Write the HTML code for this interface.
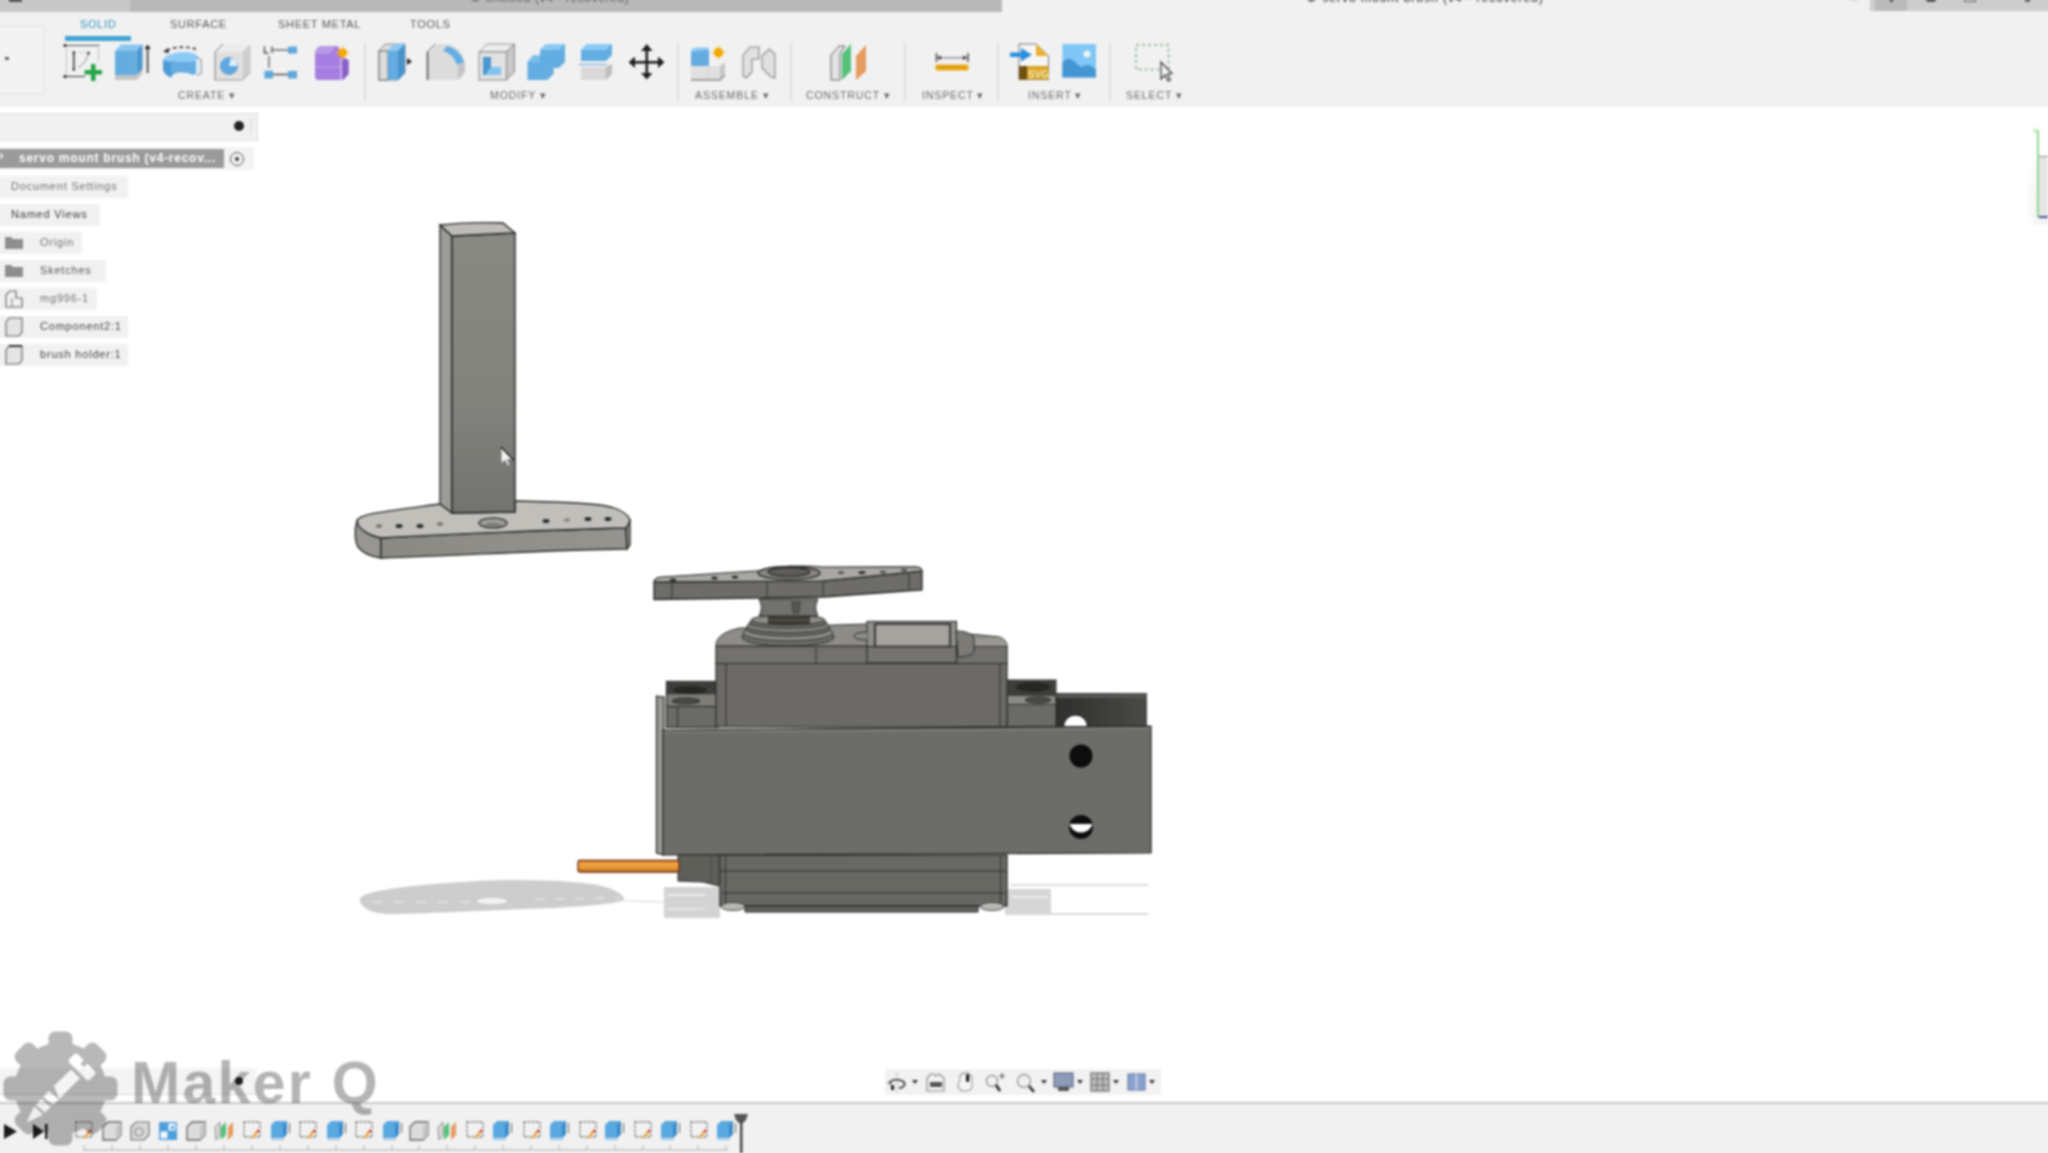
<!DOCTYPE html>
<html><head><meta charset="utf-8">
<style>
*{margin:0;padding:0;box-sizing:border-box}
html,body{width:2048px;height:1153px;overflow:hidden;background:#fff;font-family:"Liberation Sans",sans-serif;position:relative}
.a{position:absolute}
.tab{position:absolute;top:18px;font-size:11px;color:#5a5a5a;letter-spacing:0.7px;white-space:nowrap}
.lbl{position:absolute;top:89px;font-size:10.5px;color:#6a6a6a;white-space:nowrap;letter-spacing:0.9px}
.sep{position:absolute;top:43px;width:2px;height:58px;background:#dedede}
.bi{position:absolute;left:-8px;height:22px;background:#f1f1f1}
.bt{position:absolute;font-size:11px;color:#707070;white-space:nowrap;top:4px;letter-spacing:0.8px}
svg{position:absolute;overflow:visible}
</style></head><body><div id="root" style="position:absolute;left:-8px;top:-8px;width:2064px;height:1169px;overflow:hidden;background:#fff;filter:blur(0.8px)"><div id="in" style="position:absolute;left:8px;top:8px;width:2048px;height:1153px">
<!-- title bar -->
<div class="a" style="left:-8px;top:-8px;width:2064px;height:20px;background:#f1f1f1"></div>
<div class="a" style="left:-8px;top:-8px;width:138px;height:20px;background:#c8c8c8"></div>
<div class="a" style="left:130px;top:-8px;width:872px;height:20px;background:#b9b9b9"></div>
<div class="a" style="left:9px;top:-8px;width:13px;height:10px;background:#555"></div>
<div class="a" style="left:1870px;top:-8px;width:186px;height:19px;background:#cdcdcd"></div>
<div class="a" style="left:1875px;top:-8px;width:32px;height:19px;background:#bababa"></div>
<div class="a" style="left:1890px;top:-8px;width:3px;height:10px;background:#555"></div>
<div class="a" style="left:1926px;top:-8px;width:10px;height:10px;background:#555;border-radius:3px"></div>
<div class="a" style="left:1964px;top:-8px;width:12px;height:10px;border:1.5px solid #666"></div>
<div class="a" style="left:2025px;top:-8px;width:5px;height:10px;background:#666"></div>
<div class="a" style="left:1850px;top:-8px;width:8px;height:9px;background:#e0e0e0"></div>
<div class="a" style="left:470px;top:-9px;font-size:12px;color:#666;white-space:nowrap;letter-spacing:0.6px">⚙ Untitled (v4 - recovered)</div>
<div class="a" style="left:1306px;top:-9px;font-size:12px;color:#333;white-space:nowrap;letter-spacing:1px">⚙ servo mount brush (v4 - recovered)</div>
<!-- toolbar -->
<div class="a" style="left:-8px;top:12px;width:2064px;height:95px;background:#f1f1f1"></div>
<div class="a" style="left:-9px;top:26px;width:53px;height:68px;border:1px solid #e2e2e2;background:#f3f3f3"></div>
<div class="a" style="left:5px;top:57px;width:4px;height:3px;background:#666"></div>
<div class="tab" style="left:80px;color:#3590c4">SOLID</div>
<div class="tab" style="left:170px">SURFACE</div>
<div class="tab" style="left:278px">SHEET METAL</div>
<div class="tab" style="left:410px">TOOLS</div>
<div class="a" style="left:65px;top:36px;width:66px;height:5px;background:#3fa4d3"></div>
<div class="lbl" style="left:178px">CREATE ▾</div>
<div class="lbl" style="left:490px">MODIFY ▾</div>
<div class="lbl" style="left:695px">ASSEMBLE ▾</div>
<div class="lbl" style="left:806px">CONSTRUCT ▾</div>
<div class="lbl" style="left:922px">INSPECT ▾</div>
<div class="lbl" style="left:1028px">INSERT ▾</div>
<div class="lbl" style="left:1126px">SELECT ▾</div>
<div class="sep" style="left:364px"></div>
<div class="sep" style="left:677px"></div>
<div class="sep" style="left:790px"></div>
<div class="sep" style="left:904px"></div>
<div class="sep" style="left:997px"></div>
<div class="sep" style="left:1109px"></div>
<!--ICONS-->
<svg style="left:0;top:0" width="1200" height="110" viewBox="0 0 1200 110"><defs><filter id="ib" x="-2%" y="-20%" width="104%" height="140%"><feGaussianBlur stdDeviation="0.8"/></filter></defs>
<g >
<!-- sketch -->
<g>
 <line x1="64" y1="45.5" x2="99.5" y2="45.5" stroke="#4a4a4a" stroke-width="1.2"/>
 <line x1="64" y1="76.5" x2="85" y2="76.5" stroke="#4a4a4a" stroke-width="1.2"/>
 <circle cx="65" cy="45.5" r="1.6" fill="#222"/>
 <circle cx="65" cy="76.5" r="1.6" fill="#222"/>
 <line x1="66.5" y1="48" x2="66.5" y2="75" stroke="#c4c4c4" stroke-width="1"/>
 <line x1="98.5" y1="48" x2="98.5" y2="62" stroke="#c4c4c4" stroke-width="1"/>
 <line x1="73.8" y1="52" x2="73.8" y2="70" stroke="#333" stroke-width="1.5"/>
 <circle cx="73.8" cy="52.5" r="1.3" fill="#222"/>
 <circle cx="73.8" cy="69.5" r="1.3" fill="#222"/>
 <path d="M78.5,67.5 C84,64 88,58 88.5,53" stroke="#555" stroke-width="1" fill="none" stroke-dasharray="2 1"/>
 <circle cx="88.5" cy="53" r="1.3" fill="#222"/>
 <line x1="78" y1="52.5" x2="86" y2="52.5" stroke="#ccc" stroke-width="1"/>
 <path d="M91,64 h4.5 v6 h6.5 v4.5 h-6.5 v6.5 h-4.5 v-6.5 h-6.5 v-4.5 h6.5 z" fill="#25a448"/>
</g>
<!-- extrude -->
<g>
 <path d="M115,51 L121,44.5 L142.6,44.5 L136.6,51 Z" fill="#88c6f0"/>
 <path d="M136.6,51 L142.6,44.5 L142.6,69 L136.6,75 Z" fill="#4d97cf"/>
 <rect x="115" y="51" width="21.6" height="24" fill="#65addf"/>
 <path d="M115,75 L136.6,75 L142.6,69 L142.6,73 L137,80 L115,80 Z" fill="#c3c3c3"/>
 <line x1="147.6" y1="48" x2="147.6" y2="73" stroke="#444" stroke-width="1.8"/>
 <path d="M144.5,49 L147.6,44.5 L150.7,49 Z" fill="#222"/>
</g>
<!-- revolve -->
<g>
 <path d="M163,60 C170,61 185,62 196,61 L196,74 L192,75 C188,72 178,72 174,74 L171,77.5 C166,75 163,72 163,69 Z" fill="#66ade3"/>
 <path d="M163,60 C165,55 175,52 185,52 C192,52 197,54 198,58 L196,61 C185,62 170,61 163,60 Z" fill="#8ccbf8"/>
 <path d="M163,60 L171,63 L171,77.5 C166,75 163,72 163,69 Z" fill="#4e9ad6"/>
 <path d="M197,57 L201.5,60 L201.5,73 L196.5,76" stroke="#666" stroke-width="1.1" fill="#dbeaf5" stroke-dasharray="2 1.5"/>
 <path d="M167,50.5 C174,46.5 188,46 197,49.5" stroke="#333" stroke-width="1.7" fill="none" stroke-dasharray="3.5 3"/>
 <path d="M163,51.5 L168.5,48 L168.5,53.5 Z" fill="#333"/>
</g>
<!-- hole -->
<g>
 <path d="M215,52 L223,44 L250.5,44 L242.5,52 Z" fill="#ececec"/>
 <path d="M242.5,52 L250.5,44 L250.5,72 L242.5,80 Z" fill="#cdcdcd"/>
 <rect x="215" y="52" width="27.5" height="28" fill="#e0e0e0"/>
 <path d="M215,80 L215,52 L223,44" stroke="#777" stroke-width="1" fill="none"/>
 <path d="M215,80 L242.5,80 L250.5,72" stroke="#999" stroke-width="1" fill="none"/>
 <circle cx="229" cy="66" r="8.5" fill="#5ea8e2" stroke="#4a7fb0" stroke-width="1" stroke-dasharray="2 1.5"/>
 <path d="M231,58 A8.5,8.5 0 0 1 237.5,66 L229,66 Z" fill="#e2f2ff"/>
</g>
<!-- pattern -->
<g>
 <path d="M264.5,46.5 v6.5 h4 M272,46.5 v6.5" stroke="#555" stroke-width="1.5" fill="none"/>
 <line x1="273" y1="50" x2="288" y2="50" stroke="#666" stroke-width="1.4"/>
 <line x1="273" y1="74.5" x2="288" y2="74.5" stroke="#555" stroke-width="1.6"/>
 <line x1="269" y1="56" x2="269" y2="68" stroke="#555" stroke-width="1.2"/>
 <rect x="264.4" y="70.8" width="8.6" height="7.7" fill="#5ea8dc"/>
 <rect x="288" y="46.6" width="9" height="7" fill="#5ea8dc"/>
 <rect x="288" y="71" width="9" height="7.5" fill="#5ea8dc"/>
</g>
<!-- create form -->
<g>
 <path d="M315,54 C315,50 318,46 322,46 L338,46 L341,56 L348.5,60 L348.5,74 L343,80 L318,80 C316,80 315,78 315,76 Z" fill="#a67de0"/>
 <path d="M315,54 C316,49 319,46 322,46 L336,46 L330,54 Z" fill="#b899e8"/>
 <path d="M342,58 L348.5,60 L348.5,74 L343,80 Z" fill="#875fc6"/>
 <line x1="316" y1="67" x2="342" y2="67" stroke="#c2a6ee" stroke-width="1"/>
 <line x1="341" y1="58" x2="341" y2="80" stroke="#ead8ff" stroke-width="1"/>
 <circle cx="342.5" cy="52.8" r="4.6" fill="#f2a900"/>
 <g stroke="#f6c040" stroke-width="1.2"><line x1="342.5" y1="45.5" x2="342.5" y2="47.5"/><line x1="349.5" y1="52.8" x2="347.5" y2="52.8"/><line x1="335.5" y1="52.8" x2="337.5" y2="52.8"/><line x1="342.5" y1="60" x2="342.5" y2="58"/></g>
</g>
<!-- press pull -->
<g>
 <path d="M379,51 L385,44 L405,44 L405,73 L398,80 L379,80 Z" fill="#ddd" stroke="#777" stroke-width="0.8"/>
 <rect x="379" y="51" width="9" height="29" fill="#dcdcdc" stroke="#666" stroke-width="1"/>
 <path d="M388,51 L394,44 L405,44 L405,73 L398,80 L388,80 Z" fill="#63abe0"/>
 <path d="M388,51 L394,44 L405,44 L398,51 Z" fill="#8ccaf3"/>
 <path d="M398,51 L405,44 L405,73 L398,80 Z" fill="#4a94cc"/>
 <path d="M407,58 L412,61.5 L407,65 Z" fill="#222"/>
</g>
<!-- fillet -->
<g>
 <path d="M427,52 L435,44 L448,44 C458,46 464,54 465,64 L465,72 L458,80 L427,80 Z" fill="#dcdcdc"/>
 <path d="M447,46 C456,48 462,55 464,62 L457,65 C455,58 450,53 443,51 Z" fill="#62aee4"/>
 <path d="M458,66 L465,62 L465,72 L458,80 Z" fill="#c4c4c4"/>
 <line x1="427.5" y1="52" x2="427.5" y2="80" stroke="#555" stroke-width="1.6"/>
 <line x1="427" y1="52" x2="435" y2="44" stroke="#777" stroke-width="1"/>
</g>
<!-- shell -->
<g>
 <path d="M479,52 L487,44 L514.5,44 L506.5,52 Z" fill="#ececec" stroke="#888" stroke-width="0.8"/>
 <path d="M506.5,52 L514.5,44 L514.5,72 L506.5,80 Z" fill="#c8c8c8" stroke="#777" stroke-width="0.8"/>
 <rect x="479" y="52" width="27.5" height="28" fill="#e2e2e2" stroke="#888" stroke-width="1"/>
 <path d="M483,57 L491,57 L491,67 L501,67 L501,75 L483,75 Z" fill="#80c2f0"/>
 <path d="M483,57 L491,57 L491,67 L485,75 L483,75 Z" fill="#4a97d2"/>
</g>
<!-- combine -->
<g>
 <path d="M540,50 L546,44 L565,44 L565,62 L559,68 L540,68 Z" fill="#63ade2"/>
 <path d="M540,50 L546,44 L565,44 L559,50 Z" fill="#8ccaf3"/>
 <path d="M527.5,62 L533,55.6 L553.6,55.6 L553.6,74 L547,80 L527.5,80 Z" fill="#63ade2"/>
 <path d="M527.5,62 L533,55.6 L540,55.6 L540,62 Z" fill="#7cbdea"/>
</g>
<!-- split -->
<g>
 <path d="M581,50 L587,44 L612,44 L612,55 L606,61 L581,61 Z" fill="#63ade2"/>
 <path d="M581,50 L587,44 L612,44 L606,50 Z" fill="#8ccaf3"/>
 <line x1="579" y1="64.5" x2="607" y2="64.5" stroke="#8fb8d8" stroke-width="1.5"/>
 <path d="M581,67 L606,67 L612,64 L612,74 L606,80 L581,80 Z" fill="#d8d8d8"/>
 <path d="M606,67 L612,64 L612,74 L606,80 Z" fill="#bdbdbd"/>
</g>
<!-- move -->
<g fill="#1e1e1e">
 <rect x="632" y="61" width="29" height="2.6"/>
 <rect x="645.5" y="48" width="2.6" height="28"/>
 <path d="M628.6,62.2 L635,56.5 L635,68 Z"/>
 <path d="M664.5,62.2 L658,56.5 L658,68 Z"/>
 <path d="M646.8,44 L641,51 L652.5,51 Z"/>
 <path d="M646.8,79.4 L641,73 L652.5,73 Z"/>
</g>
<!-- new component -->
<g>
 <path d="M691,80 L691,53 C691,50 693,49 695,49 L709,49 L709,66 L722,66 L725,62 L725,75 L720,80 Z" fill="#e0e0e0"/>
 <path d="M691,66 L691,53 C691,50 693,49 695,49 L709,49 L709,66 Z" fill="#64abe0"/>
 <path d="M691,49.5 L696,47.5 L709,47.5 L709,50 L691,52 Z" fill="#8ccaf3"/>
 <path d="M720,66 L725,62 L725,75 L720,80 Z" fill="#c8c8c8"/>
 <line x1="708.5" y1="67" x2="708.5" y2="80" stroke="#d0d0d0" stroke-width="1"/>
 <path d="M691,80 L720,80 L725,75" stroke="#8a8a8a" stroke-width="1.3" fill="none"/>
 <circle cx="718.5" cy="52.6" r="4.8" fill="#f2a900"/>
 <g stroke="#f6c040" stroke-width="1.2"><line x1="718.5" y1="45.5" x2="718.5" y2="47.5"/><line x1="725.5" y1="52.6" x2="723.5" y2="52.6"/><line x1="711.5" y1="52.6" x2="713.5" y2="52.6"/><line x1="718.5" y1="59.6" x2="718.5" y2="57.6"/></g>
</g>
<!-- joint -->
<g fill="#e0e0e0" stroke="#888" stroke-width="1.1">
 <path d="M743,55 L750,47 L759,47 L759,59 L752,59 L752,72 L746,78 L743,76 Z"/>
 <path d="M762,56 L769,49 L775,54 L775,78 L771,77 L762,68 Z"/>
</g>
<!-- construct -->
<g>
 <path d="M831,55 L839,46 L845,46 L840,54 L840,80 L831,80 Z" fill="#e2e2e2" stroke="#666" stroke-width="1"/>
 <path d="M842,54 L851,44 L851,71 L842,80 Z" fill="#55c27a"/>
 <path d="M856,56 L866,45 L866,71 L856,80 Z" fill="#e69a5e"/>
</g>
<!-- measure -->
<g>
 <line x1="936.5" y1="53" x2="936.5" y2="62" stroke="#555" stroke-width="1.6"/>
 <line x1="968" y1="53" x2="968" y2="62" stroke="#555" stroke-width="1.6"/>
 <line x1="937" y1="57.8" x2="967" y2="57.8" stroke="#666" stroke-width="1"/>
 <path d="M937,57.8 L941,55.5 L941,60 Z M967,57.8 L963,55.5 L963,60 Z" fill="#333"/>
 <rect x="935.5" y="64.4" width="33" height="6" rx="1.5" fill="#eca812"/>
 <line x1="938" y1="67.3" x2="966" y2="67.3" stroke="#a97a08" stroke-width="1" stroke-dasharray="2 2"/>
</g>
<!-- insert svg -->
<g>
 <path d="M1019,44 L1036,44 L1048.5,56 L1048.5,79.5 L1019,79.5 Z" fill="#f6f6f6" stroke="#777" stroke-width="1"/>
 <path d="M1036,44 L1048.5,56 L1036,56 Z" fill="#e8b030"/>
 <rect x="1019" y="66" width="29.5" height="13.5" fill="#d8a428"/>
 <rect x="1019" y="66" width="8" height="13.5" fill="#6e5010"/>
 <text x="1028" y="77.5" font-family="Liberation Sans" font-size="10" font-weight="bold" fill="#f8e8b0">SVG</text>
 <rect x="1010" y="52.5" width="13" height="4.5" fill="#2a8ee0"/>
 <path d="M1021,48 L1032,54.7 L1021,61.5 Z" fill="#2a8ee0"/>
</g>
<!-- canvas -->
<g>
 <rect x="1062.4" y="44" width="33.6" height="33.5" fill="#80c6f6"/>
 <path d="M1062.4,77.5 L1062.4,63 C1066,57 1071,58 1075,62 C1079,66 1081,68 1084,66 C1087,64 1091,65 1096,70 L1096,77.5 Z" fill="#4496d2"/>
 <circle cx="1087" cy="54" r="3.5" fill="#e8f8f0"/>
</g>
<!-- select -->
<g>
 <rect x="1136" y="45" width="32.5" height="24.5" fill="none" stroke="#7fb08a" stroke-width="1.5" stroke-dasharray="3 3"/>
 <path d="M1161,62 L1161,79 L1165,75 L1168,81 L1170.5,80 L1167.5,74 L1172,73.5 Z" fill="#f2f2f2" stroke="#333" stroke-width="1.2"/>
</g>
</g>
</svg>

<!--/ICONS-->
<!-- browser -->
<div class="a" style="left:-9px;top:113px;width:267px;height:28px;background:#f1f1f1;border:1px solid #dcdcdc"></div>
<div class="a" style="left:234px;top:121px;width:10px;height:10px;border-radius:50%;background:#222"></div>
<div class="a" style="left:250px;top:118px;width:2px;height:16px;background:#e4e4e4"></div>
<div class="a" style="left:-8px;top:147px;width:262px;height:23px;background:#f3f3f3"></div>
<div class="a" style="left:-8px;top:149px;width:232px;height:19px;background:#9a9a9a"></div>
<div class="a" style="left:19px;top:151px;font-size:12px;font-weight:bold;color:#fff;white-space:nowrap;letter-spacing:0.75px">servo mount brush (v4-recov...</div>
<div class="a" style="left:230px;top:152px;width:14px;height:14px;border-radius:50%;border:1.5px solid #555"></div>
<div class="a" style="left:235px;top:157px;width:4px;height:4px;border-radius:50%;background:#333"></div>
<div class="bi" style="top:176px;width:136px"><span class="bt" style="left:19px">Document Settings</span></div>
<div class="bi" style="top:204px;width:108px"><span class="bt" style="left:19px;color:#3a3a3a">Named Views</span></div>
<div class="bi" style="top:232px;width:90px"><span class="bt" style="left:48px">Origin</span></div>
<div class="bi" style="top:260px;width:114px"><span class="bt" style="left:48px;color:#555">Sketches</span></div>
<div class="bi" style="top:288px;width:105px"><span class="bt" style="left:48px">mg996-1</span></div>
<div class="bi" style="top:316px;width:136px"><span class="bt" style="left:48px;color:#444">Component2:1</span></div>
<div class="bi" style="top:344px;width:136px"><span class="bt" style="left:48px;color:#444">brush holder:1</span></div>
<!--BROWSERICONS-->
<svg style="left:0;top:140px" width="30" height="230" viewBox="0 140 30 230">
<defs><filter id="bb" x="-20%" y="-5%" width="140%" height="110%"><feGaussianBlur stdDeviation="0.8"/></filter></defs>
<g >
 <path d="M0,152 L4,156 L0,160 Z" fill="#ddd"/>
 <!-- folders -->
 <path d="M5,237 L11,237 L13,239 L23,239 L23,249 L5,249 Z" fill="#8e8e8e"/>
 <path d="M5,265 L11,265 L13,267 L23,267 L23,277 L5,277 Z" fill="#8e8e8e"/>
 <!-- mg996 component with link -->
 <path d="M6,296 L6,307 L22,307 L22,298 L16,298 L16,291 L10,291 L6,295 Z" fill="#f2f2f2" stroke="#666" stroke-width="1.2"/>
 <line x1="12" y1="298" x2="12" y2="307" stroke="#777" stroke-width="1"/>
 <!-- cubes -->
 <path d="M6,322 L9,318 L22,318 L22,332 L19,336 L6,336 Z" fill="#e4e4e4" stroke="#666" stroke-width="1.2"/>
 <path d="M6,350 L9,346 L22,346 L22,360 L19,364 L6,364 Z" fill="#e4e4e4" stroke="#666" stroke-width="1.2"/>
 <line x1="9" y1="346" x2="22" y2="346" stroke="#222" stroke-width="1.8"/>
</g>
</svg>

<!--/BROWSERICONS-->
<!--SCENE-->
<svg style="left:0;top:0" width="2048" height="1153" viewBox="0 0 2048 1153">
<defs>
<filter id="bl" x="-5%" y="-5%" width="110%" height="110%"><feGaussianBlur stdDeviation="0.7"/></filter>
<filter id="bl2" x="-10%" y="-50%" width="120%" height="200%"><feGaussianBlur stdDeviation="2"/></filter>
<linearGradient id="postf" x1="0" y1="0" x2="0" y2="1"><stop offset="0" stop-color="#898984"/><stop offset="0.6" stop-color="#83837e"/><stop offset="1" stop-color="#72726e"/></linearGradient>
<linearGradient id="wire" x1="0" y1="0" x2="0" y2="1"><stop offset="0" stop-color="#e8903a"/><stop offset="0.4" stop-color="#f2a640"/><stop offset="1" stop-color="#c87820"/></linearGradient>
<linearGradient id="wallg" x1="0" y1="0" x2="1" y2="0"><stop offset="0" stop-color="#2e2e2c"/><stop offset="1" stop-color="#4a4a48"/></linearGradient>
<linearGradient id="basef" x1="0" y1="0" x2="1" y2="0"><stop offset="0" stop-color="#8a8984"/><stop offset="1" stop-color="#95948f"/></linearGradient>
</defs>
<g>
 <!-- brush holder shadow -->
 <path d="M360,899 C362,890 420,884 488,880.5 C540,879 590,882 606,887 C618,891 625,896 624,900 C615,905 560,908 525,909 C470,911 420,914 386,914 C368,913 359,906 360,899 Z" fill="#cdcdcd"/>
 <line x1="372" y1="902" x2="470" y2="902" stroke="#e6e6e6" stroke-width="1.5" stroke-dasharray="10 12"/>
 <ellipse cx="492" cy="901" rx="15" ry="3" fill="#f4f4f4"/>
 <line x1="535" y1="899" x2="620" y2="898" stroke="#e2e2e2" stroke-width="1.5" stroke-dasharray="10 10"/>
 <line x1="624" y1="901" x2="664" y2="902" stroke="#d8d8d8" stroke-width="1"/>
 <!-- servo shadow -->
 <rect x="664" y="887" width="56" height="31" fill="#d3d3d3"/>
 <line x1="668" y1="895" x2="705" y2="895" stroke="#eeeeee" stroke-width="2"/>
 <line x1="668" y1="909" x2="705" y2="909" stroke="#eaeaea" stroke-width="1.5"/>
 <rect x="1005" y="889" width="46" height="26" fill="#d6d6d6"/>
 <line x1="1012" y1="897" x2="1048" y2="897" stroke="#eeeeee" stroke-width="2"/>
</g>
<g filter="url(#bl)">
 <line x1="1010" y1="885" x2="1148" y2="885" stroke="#dcdcdc" stroke-width="2"/>
 <line x1="1010" y1="914" x2="1148" y2="914" stroke="#d8d8d8" stroke-width="2"/>
 <!-- ===== brush holder ===== -->
 <!-- base left end -->
 <path d="M357,521 C354,530 355,542 358,547 C364,554 372,557 381,558 L381,538 C370,536 360,530 357,521 Z" fill="#979692" stroke="#262624" stroke-width="1.3"/>
 <!-- base front -->
 <path d="M381,538 C460,534 540,530 626,528 L627,549 C540,550 460,556 381,558 Z" fill="url(#basef)" stroke="#262624" stroke-width="1.3"/>
 <path d="M626,528 L630,521 L630,545 L627,549 Z" fill="#8e8d88" stroke="#262624" stroke-width="1.3"/>
 <!-- base top -->
 <path d="M357,521 C358,514 380,512 440,504 L452,513 L515,512 L515,501 C560,502 600,503 614,508 C626,512 630,518 630,521 L626,528 C540,530 460,534 381,538 C368,535 358,529 357,521 Z" fill="#c1bfba" stroke="#262624" stroke-width="1.3"/>
 <!-- holes -->
 <g fill="#2c2c2a">
  <ellipse cx="379" cy="526" rx="3" ry="2" fill="#7a7873"/>
  <ellipse cx="399" cy="526" rx="3.5" ry="2"/>
  <ellipse cx="420" cy="526" rx="3.5" ry="2"/>
  <ellipse cx="440" cy="524" rx="3" ry="2" fill="#7a7873"/>
  <ellipse cx="546" cy="521" rx="3.5" ry="2"/>
  <ellipse cx="567" cy="520" rx="3" ry="2" fill="#8a8883"/>
  <ellipse cx="588" cy="519" rx="3.5" ry="2"/>
  <ellipse cx="608" cy="519" rx="3.5" ry="2"/>
 </g>
 <ellipse cx="493" cy="523" rx="14" ry="5" fill="#a09e99" stroke="#3a3a38" stroke-width="1.5"/>
 <ellipse cx="493" cy="525" rx="8" ry="2.5" fill="#7d7c78"/>
 <!-- post -->
 <path d="M440,225 L452,236 L452,513 L440,504 Z" fill="#9c9b97" stroke="#262624" stroke-width="1.3"/>
 <path d="M452,236 L515,233 L515,512 L452,513 Z" fill="url(#postf)" stroke="#262624" stroke-width="1.4"/>
 <path d="M440,225 C460,223 490,222 503,223 L515,233 C495,234 470,235 452,236 Z" fill="#bebcb8" stroke="#262624" stroke-width="1.3"/>
 <!-- cursor -->
 <path d="M501,447 L501,464 L505,460.5 L507.5,466 L510,465 L507.5,459.5 L513.5,460 Z" fill="#f4f4f4" stroke="#555" stroke-width="0.7"/>
 <path d="M501,447 L513.5,460" stroke="#111" stroke-width="1.2"/>

 <!-- ===== servo ===== -->
 <!-- bracket back wall -->
 <rect x="1054" y="693" width="93" height="34" fill="url(#wallg)"/>
 <rect x="1056" y="694" width="90" height="4" fill="#575755"/>
 <path d="M1063.5,727 A12,12 0 0 1 1087.5,727 Z" fill="#fff" stroke="#111" stroke-width="1"/>
 <!-- right tab -->
 <rect x="1007" y="680" width="49" height="47" fill="#6b6a66" stroke="#2a2a28" stroke-width="1"/>
 <rect x="1008" y="681" width="47" height="15" fill="#3e3d3a"/>
 <ellipse cx="1033" cy="687" rx="17" ry="5" fill="#252523"/>
 <rect x="1008" y="696" width="47" height="8" fill="#8c8b86"/>
 <ellipse cx="1038" cy="700" rx="13" ry="3" fill="#4a4946" stroke="#222" stroke-width="0.8"/>
 <line x1="1008" y1="704.5" x2="1055" y2="704.5" stroke="#333" stroke-width="1"/>
 <!-- left tab -->
 <rect x="666.5" y="681.5" width="52" height="46" fill="#6b6a66" stroke="#222" stroke-width="1.2"/>
 <rect x="667.5" y="682.5" width="50" height="12" fill="#3e3d3a"/>
 <ellipse cx="690" cy="690" rx="17" ry="4" fill="#252523"/>
 <rect x="667.5" y="694.5" width="50" height="12" fill="#7e7d78"/>
 <ellipse cx="686" cy="701" rx="14" ry="3" fill="#4a4946" stroke="#222" stroke-width="0.8"/>
 <line x1="667" y1="706.5" x2="718" y2="706.5" stroke="#222" stroke-width="1.2"/>
 <line x1="677.5" y1="707" x2="677.5" y2="727" stroke="#333" stroke-width="1"/>
 <!-- upper body -->
 <rect x="716" y="663" width="291" height="64" fill="#6c6b67" stroke="#2a2a28" stroke-width="1.2"/>
 <line x1="726" y1="664" x2="726" y2="726" stroke="#333" stroke-width="1"/>
 <line x1="1000" y1="664" x2="1000" y2="726" stroke="#333" stroke-width="1"/>
 <!-- top plate front -->
 <path d="M716,646 L1007,646 L1007,663.5 L716,663.5 Z" fill="#72716d" stroke="#2a2a28" stroke-width="1.2"/>
 <line x1="816" y1="647" x2="816" y2="663" stroke="#333" stroke-width="1"/>
 <!-- top plate top surface -->
 <path d="M716,646 C716,638 722,632 740,628 L868,624 L1000,637 C1005,639 1007,643 1007,646 Z" fill="#8e8c87" stroke="#2a2a28" stroke-width="1"/>
 <path d="M960,640 L1000,637 C1004,639 1006,642 1007,646 L960,646 Z" fill="#9a9893"/>
 <!-- label box -->
 <rect x="867" y="621.5" width="89.5" height="41.5" fill="#74736f" stroke="#2a2a28" stroke-width="1.2"/>
 <rect x="867.6" y="622" width="88.3" height="24.5" fill="#8f8d88"/>
 <rect x="875" y="624" width="75" height="22.5" fill="#a5a39e" stroke="#1e1e1c" stroke-width="1.5"/>
 <line x1="867" y1="646.5" x2="956" y2="646.5" stroke="#2a2a28" stroke-width="1"/>
 <path d="M956,631 C968,631 974,635 974,640 L974,650 C974,654 968,657 958,657 Z" fill="#7b7a75" stroke="#2a2a28" stroke-width="1"/>
 <path d="M867,632 C858,632 854,634 854,636 C854,638 858,640 867,640" fill="#8b8a85" stroke="#2a2a28" stroke-width="1"/>
 <!-- base rings (discs) -->
 <ellipse cx="788" cy="637" rx="46" ry="9" fill="#6e6d69" stroke="#2a2a28" stroke-width="1"/>
 <ellipse cx="788" cy="633" rx="45" ry="8" fill="#8b8a85" stroke="#2a2a28" stroke-width="1"/>
 <ellipse cx="788" cy="629" rx="42" ry="7" fill="#6e6d69" stroke="#2a2a28" stroke-width="1"/>
 <ellipse cx="788" cy="626" rx="41" ry="6.5" fill="#8b8a85" stroke="#2a2a28" stroke-width="1"/>
 <ellipse cx="788" cy="623" rx="39" ry="5.5" fill="#6e6d69" stroke="#2a2a28" stroke-width="1"/>
 <ellipse cx="788" cy="620" rx="37" ry="5" fill="#8e8d88" stroke="#2a2a28" stroke-width="1"/>
 <!-- gear -->
 <rect x="768" y="615" width="42" height="10" fill="#3a3935"/>
 <line x1="770" y1="620" x2="808" y2="620" stroke="#6d6a50" stroke-width="2" stroke-dasharray="2 2"/>
 <!-- neck -->
 <path d="M759,599 L818,599 C815,605 815,610 818,616 L759,616 C762,610 762,605 759,599 Z" fill="#72716d" stroke="#2a2a28" stroke-width="1"/>
 <path d="M792,602 L800,602 L799,613 L793,613 Z" fill="#5a5955" stroke="#333" stroke-width="0.8"/>
 <!-- horn front -->
 <path d="M654,582 L823,581 L922,571 L922,590 L823,597 L654,599.5 Z" fill="#6d6c68" stroke="#222" stroke-width="1.3"/>
 <line x1="767" y1="582" x2="767" y2="599" stroke="#333" stroke-width="1"/>
 <line x1="823" y1="581" x2="823" y2="597" stroke="#333" stroke-width="1"/>
 <line x1="672" y1="582" x2="672" y2="599" stroke="#333" stroke-width="1"/>
 <line x1="909" y1="572.5" x2="909" y2="591" stroke="#333" stroke-width="1"/>
 <!-- horn top -->
 <path d="M654,582 C654,579 656,577.5 662,577 L763,570.5 C775,566 805,565 822,567 L916,566.7 C920,567 922,569 922,571 L823,581 Z" fill="#a9a7a2" stroke="#222" stroke-width="1.1"/>
 <ellipse cx="789" cy="573" rx="31" ry="6.5" fill="#8a8883" stroke="#222" stroke-width="1.3"/>
 <ellipse cx="789" cy="572" rx="21" ry="4.5" fill="#5e5d59" stroke="#222" stroke-width="1.2"/>
 <g fill="#2c2c2a">
  <ellipse cx="673" cy="580" rx="3.2" ry="1.6"/>
  <ellipse cx="714.5" cy="578" rx="3.2" ry="1.6"/>
  <ellipse cx="735" cy="577" rx="3.2" ry="1.6"/>
  <ellipse cx="841" cy="572.5" rx="3" ry="1.5" fill="#55544f"/>
  <ellipse cx="862" cy="572.5" rx="3.5" ry="1.6"/>
  <ellipse cx="883" cy="572" rx="3" ry="1.5" fill="#55544f"/>
  <ellipse cx="904" cy="570" rx="3" ry="1.5" fill="#55544f"/>
 </g>
 <!-- bracket front -->
 <path d="M656.5,696 L664,697 L664,855 L656.5,853 Z" fill="#9a9995" stroke="#222" stroke-width="1.2"/>
 <path d="M663,730 L1151,726 L1151,853 L663,855 Z" fill="#6c6c68" stroke="#222" stroke-width="1.2"/>
 <line x1="664" y1="732" x2="1150" y2="728.5" stroke="#888783" stroke-width="1.2"/>
 <circle cx="1081" cy="756" r="11.5" fill="#0a0a0a"/>
 <circle cx="1081" cy="827" r="12" fill="#111"/>
 <path d="M1069.5,824 A12,12 0 0 0 1092.5,824 Z" fill="#fff"/>
 <!-- lower body -->
 <rect x="720" y="855" width="287" height="51" fill="#686763" stroke="#222" stroke-width="1.2"/>
 <line x1="720" y1="871" x2="1007" y2="871" stroke="#2e2e2c" stroke-width="1.1"/>
 <line x1="722" y1="893" x2="1005" y2="893" stroke="#2e2e2c" stroke-width="1.1"/>
 <line x1="725.5" y1="856" x2="725.5" y2="905" stroke="#333" stroke-width="1"/>
 <line x1="1000.5" y1="856" x2="1000.5" y2="905" stroke="#333" stroke-width="1"/>
 <path d="M745,906 L978,906 L978,912 L745,912 Z" fill="#62615d" stroke="#222" stroke-width="1"/>
 <ellipse cx="733" cy="906.5" rx="12" ry="4" fill="#b9b8b4" stroke="#333" stroke-width="0.9"/>
 <ellipse cx="992" cy="906.5" rx="12" ry="4" fill="#b9b8b4" stroke="#333" stroke-width="0.9"/>
 <!-- connector -->
 <path d="M678,855 L719,855 L719,886 L703,882 L678,881 Z" fill="#5f5e5a" stroke="#2a2a28" stroke-width="1"/>
 <line x1="711" y1="856" x2="711" y2="884" stroke="#444" stroke-width="1"/>
 <!-- wire -->
 <rect x="578" y="860.5" width="101" height="11.5" rx="1.5" fill="url(#wire)" stroke="#6a2a10" stroke-width="1.3"/>
</g>
</svg>

<!--/SCENE-->
<!-- viewcube -->
<div class="a" style="left:2025px;top:150px;width:23px;height:75px;background:radial-gradient(ellipse at 80% 70%, rgba(0,0,0,0.08), rgba(0,0,0,0) 70%)"></div>
<div class="a" style="left:2037px;top:130px;width:2px;height:88px;background:#8fd68f"></div>
<div class="a" style="left:2032px;top:126px;font-size:9px;color:#9be09b">Y</div>
<div class="a" style="left:2039px;top:156px;width:9px;height:62px;background:#e6e6e6;border-top:1px solid #888;border-bottom:2px solid #4a4a9a"></div>
<!-- nav bar bottom -->
<div class="a" style="left:885px;top:1069px;width:276px;height:26px;background:#f2f2f2"></div>
<!--NAVICONS-->
<svg style="left:880px;top:1065px" width="290" height="35" viewBox="880 1065 290 35">
<defs><filter id="nb" x="-2%" y="-20%" width="104%" height="140%"><feGaussianBlur stdDeviation="0.8"/></filter></defs>
<g >
 <!-- orbit -->
 <path d="M889,1083 C892,1079 900,1079 904,1082 C906,1085 903,1088 899,1088" stroke="#444" stroke-width="1.8" fill="none"/>
 <line x1="897" y1="1073" x2="897" y2="1092" stroke="#aaa" stroke-width="1.2" stroke-dasharray="2 1.5"/>
 <path d="M887,1083 L892,1081 L891,1085 Z" fill="#666"/>
 <rect x="891" y="1085" width="3" height="5" fill="#222"/>
 <path d="M912,1080 L918,1080 L915,1084 Z" fill="#333"/>
 <!-- look at -->
 <path d="M927,1078 L931,1074 L934,1074 L936,1076 L939,1074 L944,1078 L944,1091 L927,1091 Z" fill="none" stroke="#888" stroke-width="1.2"/>
 <rect x="930" y="1082" width="12" height="5" fill="#555"/>
 <!-- pan -->
 <path d="M960,1080 L960,1076 C960,1074 962,1074 962,1076 L962,1074 C962,1072 965,1072 965,1074 L966,1074 C966,1072 969,1072 969,1074 L969,1077 C969,1075 972,1075 972,1077 L972,1086 C972,1090 969,1091 965,1091 C961,1091 958,1089 958,1085 Z" fill="#f6f6f6" stroke="#999" stroke-width="1.1"/>
 <rect x="966" y="1074" width="3.2" height="8" rx="1.5" fill="#1a1a1a"/>
 <!-- zoom -->
 <circle cx="992" cy="1081" r="5.5" fill="none" stroke="#999" stroke-width="1.4"/>
 <path d="M996,1085 L1000,1091" stroke="#222" stroke-width="2.6"/>
 <path d="M1002,1073 v6 M999,1076 h6" stroke="#555" stroke-width="1.2"/>
 <!-- fit -->
 <circle cx="1024" cy="1081" r="6.5" fill="none" stroke="#999" stroke-width="1.4"/>
 <line x1="1029" y1="1086" x2="1034" y2="1092" stroke="#222" stroke-width="2.5"/>
 <path d="M1041,1080 L1047,1080 L1044,1084 Z" fill="#333"/>
 <!-- display -->
 <rect x="1054" y="1073" width="19" height="14" fill="#8d9bb8" stroke="#5f6a85" stroke-width="1.2"/>
 <rect x="1058" y="1087" width="11" height="4" fill="#555"/>
 <path d="M1077,1080 L1083,1080 L1080,1084 Z" fill="#333"/>
 <!-- grid -->
 <rect x="1091" y="1073" width="18" height="18" fill="#bdbdbd" stroke="#6a6a6a" stroke-width="1.2"/>
 <path d="M1097,1073 v18 M1103,1073 v18 M1091,1079 h18 M1091,1085 h18" stroke="#6f6f6f" stroke-width="1"/>
 <path d="M1113,1080 L1119,1080 L1116,1084 Z" fill="#333"/>
 <!-- viewports -->
 <rect x="1128" y="1074" width="17" height="16" fill="#89a2cf" stroke="#6a7ea6" stroke-width="1.2"/>
 <line x1="1136.5" y1="1074" x2="1136.5" y2="1090" stroke="#dde" stroke-width="1.5"/>
 <path d="M1149,1080 L1155,1080 L1152,1084 Z" fill="#333"/>
</g>
</svg>

<!--/NAVICONS-->
<!-- comments bar ghost -->
<div class="a" style="left:-8px;top:1068px;width:264px;height:27px;background:#f4f4f4;border-bottom:1px solid #ddd"></div>
<div class="a" style="left:235px;top:1077px;width:8px;height:8px;border-radius:50%;background:#222"></div>
<!-- timeline -->
<div class="a" style="left:-8px;top:1102px;width:2064px;height:59px;background:#f1f1f1;border-top:2px solid #c6c6c6"></div>
<!--TIMELINE-->
<svg style="left:0;top:1104px" width="800" height="49" viewBox="0 1104 800 49">
<defs><filter id="tb" x="-2%" y="-20%" width="104%" height="140%"><feGaussianBlur stdDeviation="0.8"/></filter>
<g id="tsk"><rect x="1" y="1" width="16" height="15" fill="none" stroke="#777" stroke-width="1.3" stroke-dasharray="2.5 1.5"/><path d="M9,17 L16,9" stroke="#e8a030" stroke-width="2"/><circle cx="15" cy="10" r="1.3" fill="#d23"/></g>
<g id="tbl"><path d="M0,4 L4,0 L16,0 L16,13 L12,17 L0,17 Z" fill="#5aa8e0"/><path d="M12,4 L16,0 L16,13 L12,17 Z" fill="#3d8cc8"/><line x1="0" y1="18.5" x2="13" y2="18.5" stroke="#9cc4e4" stroke-width="1.5"/><line x1="18.5" y1="2" x2="18.5" y2="12" stroke="#777" stroke-width="1.2"/></g>
<g id="tgc"><path d="M0,5 L5,0 L18,0 L18,13 L13,18 L0,18 Z" fill="#dcdcdc" stroke="#666" stroke-width="1.3"/><path d="M13,5 L18,0 L18,13 L13,18 Z" fill="#c4c4c4"/></g>
<g id="tco"><path d="M0,5 L5,0 L5,14 L1,18 Z" fill="#ddd" stroke="#888" stroke-width="1"/><path d="M6,5 L11,0 L11,13 L6,18 Z" fill="#55c07a"/><path d="M13,5 L18,0 L18,13 L13,18 Z" fill="#e69a5e"/></g>
</defs>
<g >
 <path d="M4,1124 L17,1131.5 L4,1139 Z" fill="#1a1a1a"/>
 <path d="M33,1124 L44,1131.5 L33,1139 Z" fill="#1a1a1a"/>
 <rect x="45" y="1124" width="2.5" height="15" fill="#1a1a1a"/>
 <line x1="83" y1="1150" x2="728" y2="1150" stroke="#cfcfcf" stroke-width="2"/>
 <use href="#tsk" x="75" y="1121"/>
 <use href="#tgc" x="103" y="1122"/>
 <g transform="translate(131,1122)"><path d="M0,5 L5,0 L18,0 L18,13 L13,18 L0,18 Z" fill="#d8d8d8" stroke="#777" stroke-width="1.2"/><circle cx="8" cy="10" r="4" fill="none" stroke="#888" stroke-width="1.2"/></g>
 <g transform="translate(159,1122)"><rect x="0" y="0" width="18" height="18" fill="#4e9fdc"/><rect x="9.5" y="1.5" width="7" height="7" fill="#f4f8fc"/><rect x="1.5" y="9.5" width="7" height="7" fill="#f4f8fc"/><rect x="12" y="4" width="3" height="3" fill="#4e9fdc"/></g>
 <use href="#tgc" x="187" y="1122"/>
 <use href="#tco" x="215" y="1122"/>
 <use href="#tsk" x="243" y="1121"/>
 <use href="#tbl" x="271" y="1121"/>
 <use href="#tsk" x="299" y="1121"/>
 <use href="#tbl" x="327" y="1121"/>
 <use href="#tsk" x="355" y="1121"/>
 <use href="#tbl" x="383" y="1121"/>
 <use href="#tgc" x="410" y="1122"/>
 <use href="#tco" x="438" y="1122"/>
 <use href="#tsk" x="466" y="1121"/>
 <use href="#tbl" x="493" y="1121"/>
 <use href="#tsk" x="523" y="1121"/>
 <use href="#tbl" x="550" y="1121"/>
 <use href="#tsk" x="579" y="1121"/>
 <use href="#tbl" x="605" y="1121"/>
 <use href="#tsk" x="634" y="1121"/>
 <use href="#tbl" x="661" y="1121"/>
 <use href="#tsk" x="690" y="1121"/>
 <use href="#tbl" x="717" y="1121"/>
 <g stroke="#bbb" stroke-width="1.2">
  <line x1="84" y1="1145" x2="84" y2="1150"/><line x1="112" y1="1145" x2="112" y2="1150"/><line x1="140" y1="1145" x2="140" y2="1150"/><line x1="168" y1="1145" x2="168" y2="1150"/><line x1="196" y1="1145" x2="196" y2="1150"/><line x1="224" y1="1145" x2="224" y2="1150"/><line x1="252" y1="1145" x2="252" y2="1150"/><line x1="280" y1="1145" x2="280" y2="1150"/><line x1="308" y1="1145" x2="308" y2="1150"/><line x1="336" y1="1145" x2="336" y2="1150"/><line x1="364" y1="1145" x2="364" y2="1150"/><line x1="392" y1="1145" x2="392" y2="1150"/><line x1="419" y1="1145" x2="419" y2="1150"/><line x1="447" y1="1145" x2="447" y2="1150"/><line x1="475" y1="1145" x2="475" y2="1150"/><line x1="503" y1="1145" x2="503" y2="1150"/><line x1="531" y1="1145" x2="531" y2="1150"/><line x1="559" y1="1145" x2="559" y2="1150"/><line x1="587" y1="1145" x2="587" y2="1150"/><line x1="615" y1="1145" x2="615" y2="1150"/><line x1="643" y1="1145" x2="643" y2="1150"/><line x1="670" y1="1145" x2="670" y2="1150"/><line x1="698" y1="1145" x2="698" y2="1150"/><line x1="726" y1="1145" x2="726" y2="1150"/>
 </g>
 <path d="M734,1114 L748,1114 L746,1120 L743,1123 L739,1123 L736,1120 Z" fill="#555"/>
 <rect x="740" y="1120" width="2.5" height="33" fill="#444"/>
</g>
</svg>

<!--/TIMELINE-->
<!--LOGO-->
<svg style="left:0;top:1020px;mix-blend-mode:multiply" width="400" height="133" viewBox="0 1020 400 133">
<defs><filter id="lb" x="-5%" y="-5%" width="110%" height="110%"><feGaussianBlur stdDeviation="0.8"/></filter>
<mask id="sd"><rect x="0" y="1020" width="140" height="133" fill="#fff"/>
 <g transform="translate(60.5,1088.5) rotate(-45)" fill="#000">
  <path d="M-48,0 L-31,-6 L-31,6 Z"/>
  <path d="M-29,-6 L-21,-6.3 L-20,6.3 L-28,6 Z"/>
  <path d="M-18,-6.3 L-10,-6.5 L-9,6.5 L-17,6.3 Z"/>
  <path d="M-3,-6.5 L21,-6 L21,6.5 L-8,6.5 Z"/>
  <rect x="24.5" y="-14.5" width="12" height="29" rx="3"/>
  <rect x="31.5" y="-3.5" width="6" height="5" fill="#fff"/>
 </g>
</mask></defs>
<g >
 <g mask="url(#sd)" fill="#b8b8b8">
  <circle cx="60.5" cy="1088.5" r="46"/>
  <g transform="translate(60.5,1088.5)">
   <rect x="-12" y="-57" width="24" height="20" rx="7"/>
   <rect x="-12" y="-57" width="24" height="20" rx="7" transform="rotate(45)"/>
   <rect x="-12" y="-57" width="24" height="20" rx="7" transform="rotate(90)"/>
   <rect x="-12" y="-57" width="24" height="20" rx="7" transform="rotate(135)"/>
   <rect x="-12" y="-57" width="24" height="20" rx="7" transform="rotate(180)"/>
   <rect x="-12" y="-57" width="24" height="20" rx="7" transform="rotate(225)"/>
   <rect x="-12" y="-57" width="24" height="20" rx="7" transform="rotate(270)"/>
   <rect x="-12" y="-57" width="24" height="20" rx="7" transform="rotate(315)"/>
  </g>
 </g>
 <text x="131" y="1103" font-family="Liberation Sans" font-weight="bold" font-size="59" letter-spacing="2.3" fill="#b4b4b4">Maker Q</text>
</g>
</svg>

<!--/LOGO-->
</div></div></body></html>
